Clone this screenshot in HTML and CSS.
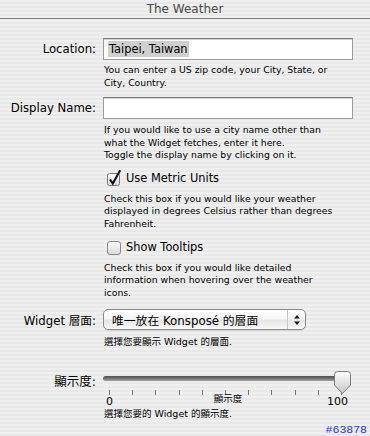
FILE: index.html
```html
<!DOCTYPE html>
<html>
<head>
<meta charset="utf-8">
<link rel="stylesheet" href="styles.css">
</head>
<body>
<div class="title">The Weather</div>
<div class="form">
  <div class="row r-loc">
    <label class="lbl">Location:</label>
    <div class="field"><span class="sel">Taipei, Taiwan</span></div>
  </div>
  <div class="row">
    <span></span>
    <p class="help h-loc">You can enter a US zip code, your City, State, or<br>City, Country.</p>
  </div>
  <div class="row r-disp">
    <label class="lbl">Display Name:</label>
    <div class="field"></div>
  </div>
  <div class="row">
    <span></span>
    <p class="help h-disp">If you would like to use a city name other than<br>what the Widget fetches, enter it here.<br>Toggle the display name by clicking on it.</p>
  </div>
  <div class="row r-chk1">
    <span></span>
    <div class="check">
      <svg class="box" width="16" height="18" viewBox="0 0 16 18">
        <defs>
          <linearGradient id="bg1" x1="0" y1="0" x2="0" y2="1">
            <stop offset="0" stop-color="#ffffff"/>
            <stop offset="1" stop-color="#d8d8d8"/>
          </linearGradient>
        </defs>
        <rect x="1.5" y="4.5" width="12" height="12" rx="2" fill="url(#bg1)" stroke="#7a7a7a"/>
        <path d="M4 10.5 L6.8 14.6 L14.2 1.2" fill="none" stroke="#111" stroke-width="2.1" stroke-linejoin="miter"/>
      </svg>
      <span>Use Metric Units</span>
    </div>
  </div>
  <div class="row">
    <span></span>
    <p class="help h-chk1">Check this box if you would like your weather<br>displayed in degrees Celsius rather than degrees<br>Fahrenheit.</p>
  </div>
  <div class="row r-chk2">
    <span></span>
    <div class="check">
      <svg class="box" width="16" height="18" viewBox="0 0 16 18">
        <defs>
          <linearGradient id="bg2" x1="0" y1="0" x2="0" y2="1">
            <stop offset="0" stop-color="#ffffff"/>
            <stop offset="1" stop-color="#d8d8d8"/>
          </linearGradient>
        </defs>
        <rect x="1.5" y="3.5" width="13" height="13" rx="2.5" fill="url(#bg2)" stroke="#8a8a8a"/>
      </svg>
      <span>Show Tooltips</span>
    </div>
  </div>
  <div class="row">
    <span></span>
    <p class="help h-chk2">Check this box if you would like detailed<br>information when hovering over the weather<br>icons.</p>
  </div>
  <div class="row r-pop">
    <label class="lbl">Widget 層面:</label>
    <div class="popup">
      <span class="pop-text">唯一放在 Konsposé 的層面</span>
      <span class="pop-arrows">
        <svg width="8" height="12" viewBox="0 0 8 12">
          <path d="M4 1 L7 4.5 L1 4.5 Z" fill="#111"/>
          <path d="M4 11 L7 7.5 L1 7.5 Z" fill="#111"/>
        </svg>
      </span>
    </div>
  </div>
  <div class="row">
    <span></span>
    <p class="sub s-pop">選擇您要顯示 Widget 的層面.</p>
  </div>
  <div class="row r-slide">
    <label class="lbl lbl-cjk">顯示度:</label>
    <div class="slider">
      <div class="track-band">
        <div class="track"></div>
        <svg class="thumb" width="17" height="24" viewBox="0 0 17 24">
          <defs>
            <linearGradient id="th" x1="0" y1="0" x2="0" y2="1">
              <stop offset="0" stop-color="#fdfdfd"/>
              <stop offset="0.5" stop-color="#e2e2e2"/>
              <stop offset="1" stop-color="#c8c8c8"/>
            </linearGradient>
          </defs>
          <path d="M3.5 0.5 H13.5 Q16.5 0.5 16.5 3.5 V14 L8.5 22.5 L0.5 14 V3.5 Q0.5 0.5 3.5 0.5 Z" fill="url(#th)" stroke="#7c7c7c"/>
          <path d="M2 3 H15" stroke="#ffffff" stroke-width="1"/>
        </svg>
      </div>
      <div class="ticks">
        <i></i><i></i><i></i><i></i><i></i><i></i><i></i><i></i><i></i><i></i><i></i>
      </div>
      <div class="scale">
        <span class="sc-min">0</span>
        <span class="sc-mid">顯示度</span>
        <span class="sc-max">100</span>
      </div>
    </div>
  </div>
  <div class="row">
    <span></span>
    <p class="sub s-slide">選擇您要的 Widget 的顯示度.</p>
  </div>
  <div class="id">#63878</div>
</div>
</body>
</html>
```

FILE: styles.css
```css
html, body {
  margin: 0;
  padding: 0;
}
body {
  width: 370px;
  height: 436px;
  overflow: hidden;
  font-family: "DejaVu Sans", "Noto Sans CJK TC", sans-serif;
  color: #000;
  background: repeating-linear-gradient(to bottom, #efefef 0, #efefef 2px, #e8e8e8 2px, #e8e8e8 4px);
}
.title {
  height: 18px;
  line-height: 19px;
  border-bottom: 1px solid #7d7d7d;
  text-align: center;
  font-size: 12px;
  color: #4a4a4a;
}
.form {
  display: flex;
  flex-direction: column;
}
.row {
  display: grid;
  grid-template-columns: 96px 1fr;
  column-gap: 7px;
  align-items: center;
}
.lbl {
  text-align: right;
  font-size: 11.7px;
  white-space: nowrap;
}
.lbl-cjk {
  font-size: 12.5px;
}
.field {
  width: 250px;
  height: 22px;
  box-sizing: border-box;
  background: #fff;
  border: 1px solid #9c9c9c;
  border-top-color: #7a7a7a;
  box-shadow: inset 0 1px 0 #d4d4d4;
  display: flex;
  align-items: center;
  padding-left: 4px;
  font-size: 11.4px;
}
.sel {
  background: #cfcfcf;
  line-height: 16px;
  padding: 0 1px;
}
.r-loc { margin-top: 19px; }
.r-disp { margin-top: 8px; }
.help {
  margin: 0;
  padding-left: 1px;
  font-size: 9.3px;
  line-height: 12.5px;
  white-space: nowrap;
}
.h-loc { margin-top: 3px; line-height: 13px; }
.h-disp { margin-top: 5px; }
.h-chk1 { margin-top: 6px; }
.h-chk2 { margin-top: 5.5px; }
.r-chk1 { margin-top: 7px; }
.r-chk2 { margin-top: 8px; }
.check {
  display: flex;
  align-items: center;
  gap: 4px;
  height: 18px;
  font-size: 11.4px;
  padding-left: 2px;
}
.box {
  display: block;
  margin-left: 1px;
}
.r-pop { margin-top: 10px; }
.popup {
  width: 203px;
  height: 21px;
  box-sizing: border-box;
  border: 1px solid #8a8a8a;
  border-radius: 5px;
  background: linear-gradient(to bottom, #ffffff 0%, #f6f6f6 45%, #e6e6e6 55%, #f8f8f8 100%);
  display: flex;
  align-items: center;
  font-size: 11.8px;
  box-shadow: 0 1px 0 rgba(0,0,0,0.08);
}
.pop-text {
  flex: 1;
  padding-left: 8px;
  white-space: nowrap;
}
.pop-arrows {
  width: 17px;
  height: 100%;
  border-left: 1px solid #c4c4c4;
  display: flex;
  align-items: center;
  justify-content: center;
}
.pop-arrows svg { display: block; }
.sub {
  margin: 0;
  padding-left: 1px;
  font-size: 9.5px;
  line-height: 12px;
  white-space: nowrap;
}
.s-pop { margin-top: 6px; }
.r-slide { margin-top: 21px; align-items: start; }
.r-slide .lbl { margin-top: 2px; }
.slider {
  width: 247px;
  display: flex;
  flex-direction: column;
}
.track-band {
  position: relative;
  height: 21px;
}
.track {
  margin-top: 7px;
  width: 244px;
  height: 4.5px;
  border-radius: 3px;
  background: linear-gradient(to bottom, #4e4e4e, #7a7a7a 60%, #a6a6a6);
}
.thumb {
  position: absolute;
  left: 231px;
  top: 2px;
}
.ticks {
  margin-left: 6px;
  width: 233px;
  height: 6px;
  display: flex;
  justify-content: space-between;
}
.ticks i {
  display: block;
  width: 1px;
  height: 5px;
  background: #777;
}
.scale {
  display: grid;
  grid-template-columns: 1fr auto 1fr;
  height: 12px;
  width: 246px;
  margin-left: 2px;
  font-size: 11px;
  line-height: 12px;
}
.sc-min { justify-self: start; padding-left: 1px; }
.sc-mid { justify-self: center; font-size: 9.5px; margin-top: -3px; }
.sc-max { justify-self: end; padding-right: 3px; }
.s-slide { margin-top: 0; }
.id {
  align-self: flex-end;
  margin-top: 4px;
  margin-right: 3px;
  font-family: "Liberation Mono", monospace;
  font-size: 11.5px;
  line-height: 12px;
  color: #2a3ad0;
}
```
